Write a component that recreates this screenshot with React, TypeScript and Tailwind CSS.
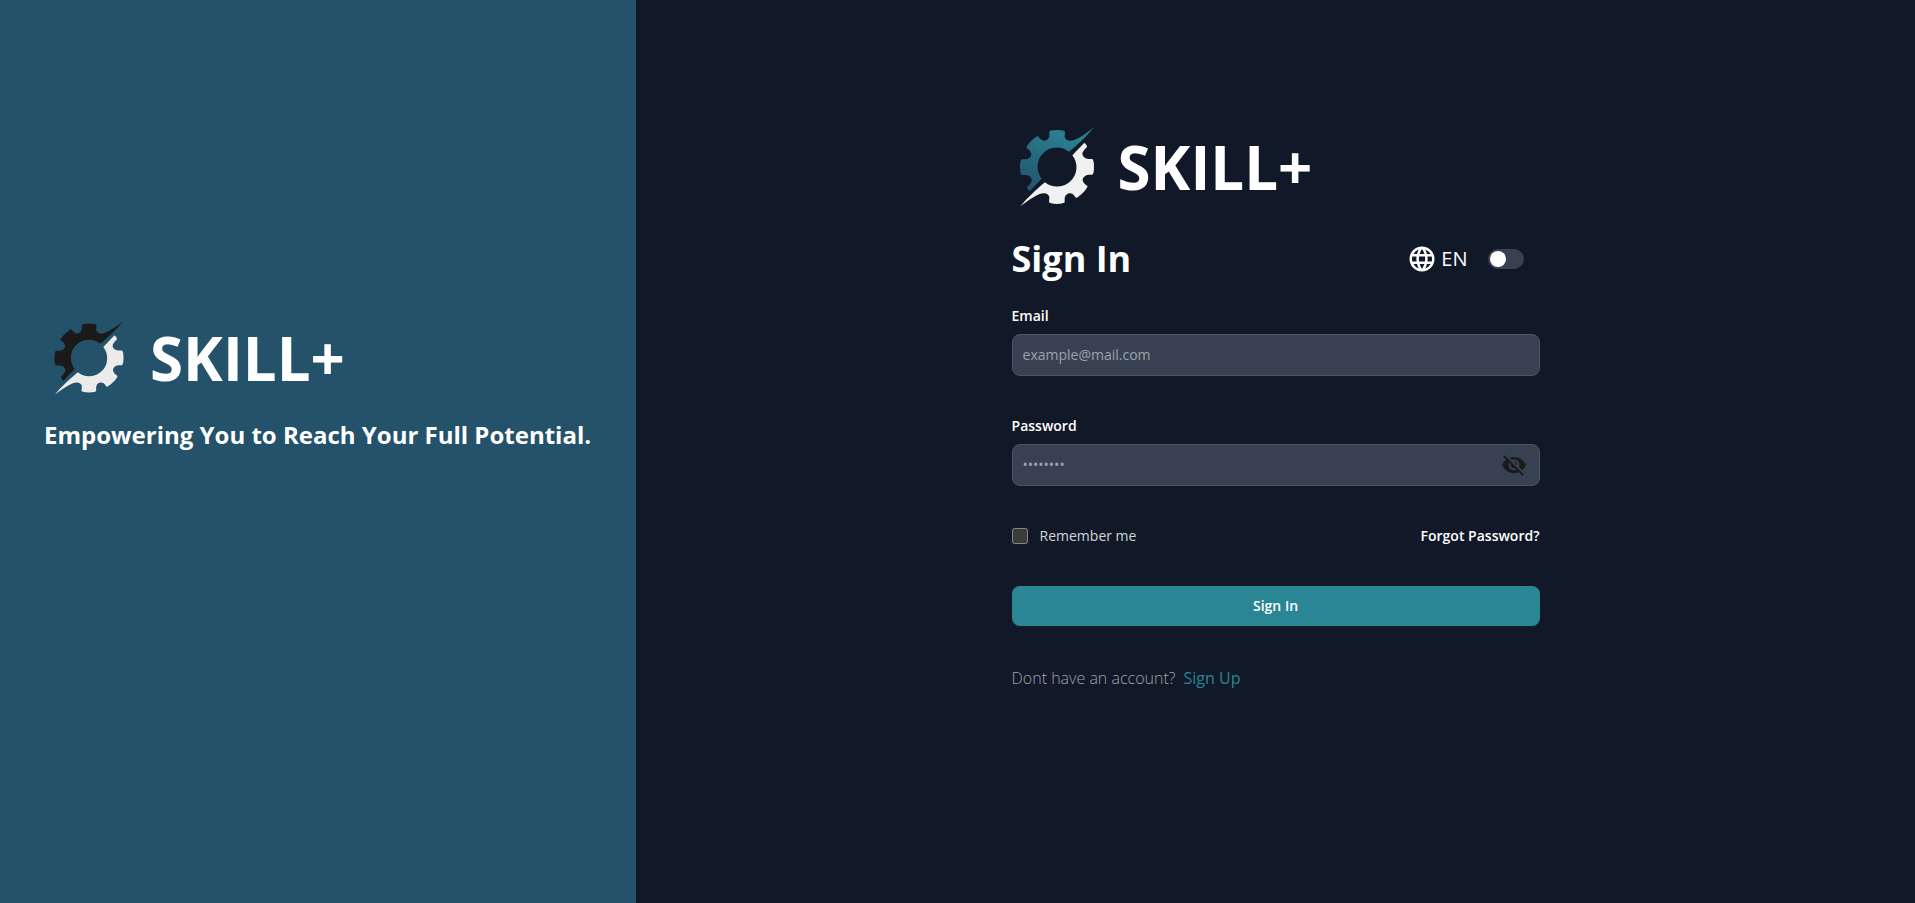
import { useState } from "react";
import { MdLanguage, MdVisibility, MdVisibilityOff } from "react-icons/md";

const GEAR_HALF =
  "M133 50 Q134 46 156 45 Q178 46 180 50 L179 65 Q181 75 193 77 C210 79 236 60 266 38 C247 62 219 88 192 110.5 A57.8 57.8 0 0 0 110 191 L74 229 Q66 223 66 216 Q81 202 80 194 Q77 182 62 180 L50 180 Q45 176 45 156 Q45 136 50 133 L62 133 Q75 131 79 120 Q80 108 64 98 Q70 82 96 64 Q101 63 104 70 Q111 79 120 77 Q131 74 133 63 Z";

function Gear({ id, from, to, light, className }: { id: string; from: string; to: string; light: string; className: string }) {
  return (
    <svg viewBox="21 21 270 270" className={className} aria-hidden="true">
      <defs>
        <linearGradient id={id} x1="0.65" y1="0" x2="0.1" y2="1">
          <stop offset="0.1" stopColor={to} />
          <stop offset="1" stopColor={from} />
        </linearGradient>
      </defs>
      <path d={GEAR_HALF} fill={`url(#${id})`} />
      <path d={GEAR_HALF} fill={light} transform="rotate(180 156 156)" />
    </svg>
  );
}

const labelClass = "text-sm font-semibold text-white";
const inputClass =
  "h-[42px] w-full rounded-lg border border-[#4b5563] bg-[#374151] px-2.5 pb-0.5 text-sm text-white outline-none placeholder:text-[#9ca3af]";

export default function App() {
  const [visible, setVisible] = useState(false);
  const [dark, setDark] = useState(false);

  return (
    <div className="flex min-h-screen bg-[#111827] font-['Open_Sans',sans-serif]">
      <aside className="shrink-0 bg-[#24526a] pt-[316px] pr-[45px] pl-11 text-white">
        <div className="flex items-center gap-4">
          <Gear id="gear-dark" from="#1a1a1a" to="#1a1a1a" light="#ebebeb" className="h-[84px] w-[90px]" />
          <span className="text-6xl leading-none font-bold">SKILL+</span>
        </div>
        <p className="mt-[19px] text-2xl leading-8 font-bold">Empowering You to Reach Your Full Potential.</p>
      </aside>

      <main className="flex flex-1 justify-center px-6 pt-[122px] pb-16">
        <div className="w-full max-w-[528px]">
          <div className="flex items-center gap-4 text-white">
            <Gear id="gear-teal" from="#25506b" to="#2a8091" light="#f0f0f0" className="size-[90px]" />
            <span className="text-6xl leading-none font-bold">SKILL+</span>
          </div>

          <div className="mt-[27px] flex items-center justify-between pr-4 text-white">
            <h1 className="text-4xl leading-10 font-bold">Sign In</h1>
            <div className="flex items-center gap-5">
              <button type="button" className="flex items-center gap-1 text-xl">
                <MdLanguage className="size-[30px]" aria-hidden="true" />
                EN
              </button>
              <button
                type="button"
                role="switch"
                aria-checked={dark}
                aria-label="Theme"
                onClick={() => setDark(!dark)}
                className={`flex h-5 w-9 items-center rounded-full bg-[#374151] p-0.5 ${dark ? "justify-end" : "justify-start"}`}
              >
                <span className="size-4 rounded-full bg-white" />
              </button>
            </div>
          </div>

          <form className="mt-[27px] flex flex-col gap-10" onSubmit={(e) => e.preventDefault()}>
            <div className="flex flex-col gap-2">
              <label htmlFor="email" className={labelClass}>Email</label>
              <input id="email" type="email" placeholder="example@mail.com" className={inputClass} />
            </div>
            <div className="flex flex-col gap-2">
              <label htmlFor="password" className={labelClass}>Password</label>
              <div className="relative">
                <input id="password" type={visible ? "text" : "password"} placeholder="••••••••" className={inputClass} />
                <button
                  type="button"
                  aria-label="Toggle password visibility"
                  onClick={() => setVisible(!visible)}
                  className="absolute inset-y-0 right-[13px] text-[#1a1a1a]"
                >
                  {visible ? <MdVisibility className="size-[26px]" /> : <MdVisibilityOff className="size-[26px]" />}
                </button>
              </div>
            </div>
            <div className="flex items-center justify-between text-sm">
              <div className="flex items-center gap-3">
                <input id="remember" type="checkbox" className="size-4 scheme-dark" />
                <label htmlFor="remember" className="text-[#d1d5db]">Remember me</label>
              </div>
              <a href="#forgot" className="font-semibold text-white">Forgot Password?</a>
            </div>
            <button type="submit" className="h-10 rounded-lg bg-[#2a8695] text-sm font-semibold text-white">Sign In</button>
            <p className="flex gap-2 text-base font-light text-[#9ca3af]">
              Dont have an account?
              <a href="#signup" className="font-medium text-[#2a8695]">Sign Up</a>
            </p>
          </form>
        </div>
      </main>
    </div>
  );
}
